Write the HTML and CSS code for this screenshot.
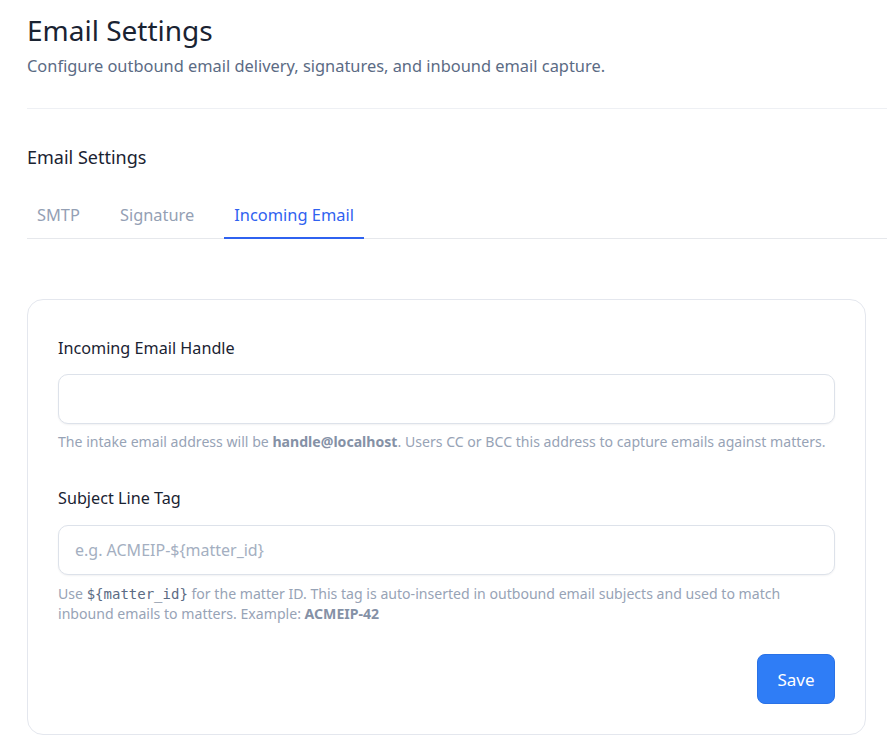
FILE: index.html
```html
<!DOCTYPE html>
<html lang="en">
<head>
  <meta charset="UTF-8">
  <meta name="viewport" content="width=device-width, initial-scale=1.0">
  <title>Email Settings</title>
  <link rel="stylesheet" href="styles.css">
</head>
<body>
  <div class="page">
    <header class="page-header">
      <h1>Email Settings</h1>
      <p class="subtitle">Configure outbound email delivery, signatures, and inbound email capture.</p>
    </header>

    <section class="settings">
      <h2>Email Settings</h2>

      <nav class="tabs">
        <a class="tab">SMTP</a>
        <a class="tab">Signature</a>
        <a class="tab active">Incoming Email</a>
      </nav>

      <form class="card">
        <div class="field">
          <label for="handle">Incoming Email Handle</label>
          <input type="text" id="handle" name="handle">
          <p class="help">The intake email address will be <strong>handle@localhost</strong>. Users CC or BCC this address to capture emails against matters.</p>
        </div>

        <div class="field">
          <label for="subjectTag">Subject Line Tag</label>
          <input type="text" id="subjectTag" name="subjectTag" placeholder="e.g. ACMEIP-${matter_id}">
          <p class="help">Use <code>${matter_id}</code> for the matter ID. This tag is auto-inserted in outbound email subjects and used to match inbound emails to matters. Example: <strong>ACMEIP-42</strong></p>
        </div>

        <div class="actions">
          <button type="button" class="btn-save">Save</button>
        </div>
      </form>
    </section>
  </div>
</body>
</html>
```

FILE: styles.css
```css
body {
  font-family: 'Noto Sans', sans-serif;
  background-color: #ffffff;
  color: #1e293b;
  margin: 0;
  padding: 0;
}

.page {
  padding: 12px 0 20px 27px;
}

.page-header {
  padding-bottom: 30px;
  border-bottom: 1px solid #eef0f4;
}

h1 {
  font-size: 28px;
  font-weight: 400;
  line-height: 36px;
  margin: 0;
  color: #1a2332;
}

.subtitle {
  font-size: 16.4px;
  line-height: 24px;
  margin: 6px 0 0;
  color: #5b6b84;
}

.settings {
  padding-top: 36px;
}

h2 {
  font-size: 18px;
  font-weight: 400;
  line-height: 24px;
  margin: 0;
  color: #1a2332;
}

.tabs {
  display: flex;
  gap: 20px;
  margin-top: 28px;
  border-bottom: 1px solid #e6e8ec;
}

.tab {
  font-size: 16.4px;
  line-height: 24px;
  padding: 6px 10px 10px;
  color: #94a0b4;
  border-bottom: 2px solid transparent;
  margin-bottom: -1px;
  cursor: pointer;
}

.tab.active {
  color: #2f62f0;
  border-bottom-color: #2f62f0;
}

.card {
  margin: 60px 21px 0 0;
  border: 1px solid #e4e7ee;
  border-radius: 16px;
  padding: 36px 30px 30px;
  display: flex;
  flex-direction: column;
  gap: 34px;
}

.field label {
  display: block;
  font-size: 16.2px;
  line-height: 24px;
  color: #1a2332;
  margin-bottom: 14px;
}

.field + .field label {
  margin-bottom: 15px;
}

.field input {
  display: block;
  box-sizing: border-box;
  width: 100%;
  height: 50px;
  padding: 0 16px;
  border: 1px solid #dde2ea;
  border-radius: 10px;
  box-shadow: 0 1px 2px rgba(30, 41, 59, 0.06);
  font-family: inherit;
  font-size: 16px;
  color: #1a2332;
  outline: none;
}

.field input::placeholder {
  color: #a4afc1;
}

.help {
  font-size: 14.1px;
  line-height: 20px;
  color: #97a3b6;
  margin: 8px 0 0;
}

.field + .field .help {
  margin-top: 9px;
}

.help strong {
  font-weight: 700;
  color: #8591a6;
}

.help code {
  font-family: 'DejaVu Sans Mono', monospace;
  font-size: 14px;
  color: #5b6b84;
}

.actions {
  display: flex;
  justify-content: flex-end;
  margin-top: -4px;
}

.btn-save {
  width: 78px;
  height: 50px;
  background-color: #2f7df6;
  color: white;
  border: 1px solid #2a72e6;
  border-radius: 8px;
  font-family: inherit;
  font-size: 17px;
  cursor: pointer;
}
```
